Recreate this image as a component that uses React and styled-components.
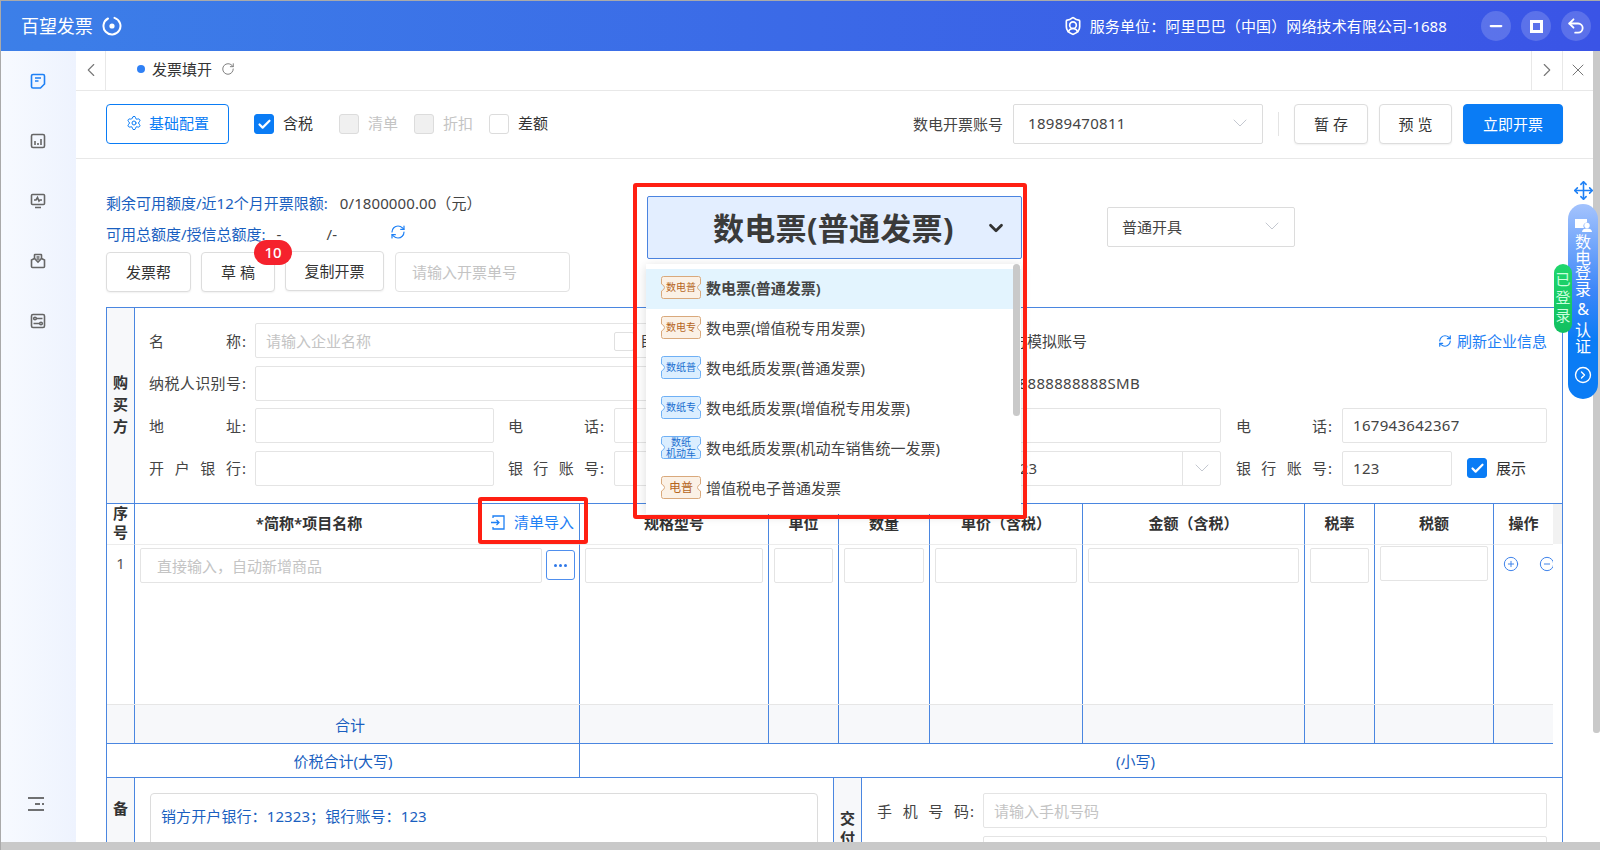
import React from 'react'
import styled, { createGlobalStyle } from 'styled-components'
import {
  Settings, RotateCw, RefreshCw, ChevronDown, ChevronLeft, ChevronRight, X, Minus,
  Undo2, Check, CirclePlus, CircleMinus, Move, CircleChevronRight, ShieldUser,
} from 'lucide-react'

const BLUE = '#0a7cf5'
const LINE = '#4a86e0'
const TEXT_BLUE = '#1a5fc0'
const COLS = '28px 445px 189px 70px 91px 153px 222px 70px 119px 59px'

const Global = createGlobalStyle`
  html, body { margin: 0; padding: 0; overflow: hidden; background: #fff; }
  * { box-sizing: border-box; }
  body {
    font-family: "Noto Sans", "Noto Sans CJK SC", sans-serif;
    font-size: 15px;
    color: #333;
  }
`

const Window = styled.div`
  position: relative;
  width: 1600px;
  height: 850px;
  overflow: hidden;
  display: flex;
  flex-direction: column;
  border-top: 1px solid #aaa;
  border-left: 1px solid #aaa;
`

// Top bar
const Header = styled.header`
  flex: 0 0 50px;
  display: flex;
  align-items: center;
  padding: 0 9px 0 20px;
  color: #fff;
  background: linear-gradient(to right, #3c7fe8, #3a54e6);
`
const Brand = styled.div`
  font-size: 18px;
  line-height: 24px;
  letter-spacing: -0.1px;
  margin-right: 9px;
`
const Service = styled.div`
  margin-left: auto;
  display: flex;
  align-items: center;
  gap: 7px;
  line-height: 24px;
  letter-spacing: 0.12px;
  margin-right: 34px;
`
const WinButton = styled.button`
  width: 30px;
  height: 30px;
  margin-left: 10px;
  padding: 0;
  border: 0;
  border-radius: 50%;
  display: flex;
  align-items: center;
  justify-content: center;
  color: #fff;
  background: rgba(255, 255, 255, 0.17);
  &:first-of-type { margin-left: 0; }
`

const Middle = styled.div`
  flex: 1;
  min-height: 0;
  display: flex;
`
const Sidebar = styled.nav`
  flex: 0 0 75px;
  display: flex;
  flex-direction: column;
  align-items: center;
  padding-right: 2px;
  background: linear-gradient(to right, #f7faff, #eef3fe);
`
const SideItem = styled.div`
  flex: 0 0 60px;
  display: flex;
  align-items: center;
  justify-content: center;
  color: ${p => (p.$active ? '#1e80f5' : '#666')};
`
const SideMenu = styled.div`
  margin-top: auto;
  margin-bottom: 31px;
  margin-right: 3px;
  display: flex;
  color: #444;
`

const Main = styled.main`
  flex: 1;
  min-width: 0;
  overflow: hidden;
  background: #fff;
  border-radius: 20px 0 0 20px;
`
const VScroll = styled.div`
  flex: 0 0 7px;
  background: #fff;
`
const VThumb = styled.div`
  height: 682px;
  background: #c9c9c9;
  border-radius: 0 0 3px 3px;
`
const HScroll = styled.div`
  flex: 0 0 8px;
  background: #c9c9c9;
`

// Tab strip
const TabRow = styled.div`
  height: 40px;
  display: flex;
  align-items: center;
  border-bottom: 1px solid #e8e8e8;
  color: #777;
`
const TabButton = styled.div`
  flex: 0 0 ${p => p.$w}px;
  height: 39px;
  padding-bottom: 2px;
  display: flex;
  align-items: center;
  justify-content: center;
  border-${p => p.$side}: 1px solid #e8e8e8;
`
const Tab = styled.div`
  flex: 1;
  display: flex;
  align-items: center;
  padding: 0 0 3px 31px;
  color: #333;
  line-height: 22px;
`
const TabDot = styled.i`
  width: 8px;
  height: 8px;
  border-radius: 50%;
  background: #2f80f5;
  margin-right: 7px;
`
const TabRefresh = styled(RotateCw)`
  color: #777;
  margin-left: 9px;
`

// Toolbar
const Toolbar = styled.div`
  height: 68px;
  padding: 0 30px 1px;
  display: flex;
  align-items: center;
  border-bottom: 1px solid #e8e8e8;
`
const ConfigButton = styled.button`
  width: 123px;
  height: 40px;
  margin-right: 25px;
  padding: 0 0 3px;
  display: flex;
  align-items: center;
  justify-content: center;
  gap: 7px;
  font: inherit;
  color: ${BLUE};
  background: #fff;
  border: 1px solid ${BLUE};
  border-radius: 4px;
`
const Box = styled.span`
  width: 20px;
  height: 20px;
  display: flex;
  align-items: center;
  justify-content: center;
  border-radius: 3px;
  color: #fff;
  border: 1px solid ${p => (p.$checked ? BLUE : '#dcdcdc')};
  background: ${p => (p.$checked ? BLUE : p.$disabled ? '#f0f0f0' : '#fff')};
`
const CheckItem = styled.label`
  display: flex;
  align-items: center;
  gap: 9px;
  line-height: 20px;
  padding-bottom: 2px;
  margin-right: ${p => p.$mr ?? 16}px;
  color: ${p => (p.$disabled ? '#c4c4c4' : '#333')};
  ${Box} { margin-bottom: -2px; }
`
const ToolRight = styled.div`
  margin-left: auto;
  display: flex;
  align-items: center;
`
const ToolLabel = styled.span`
  color: #444;
  margin-right: 10px;
  line-height: 20px;
`
const Select = styled.div`
  width: ${p => p.$w}px;
  height: 40px;
  flex: none;
  margin-top: ${p => p.$mt ?? 0}px;
  display: flex;
  align-items: center;
  justify-content: space-between;
  padding: 0 10px 2px 14px;
  color: #444;
  background: #fff;
  border: 1px solid #dcdcdc;
  border-radius: 2px;
  svg { color: #c4c8d0; }
`
const Digits = styled.span`
  letter-spacing: 0.3px;
`
const Divider = styled.i`
  width: 1px;
  height: 24px;
  background: #e4e4e4;
  margin: 0 15px;
`
const Button = styled.button`
  width: ${p => p.$w}px;
  height: 40px;
  flex: none;
  padding: 0;
  font: inherit;
  line-height: 22px;
  color: ${p => (p.$primary ? '#fff' : '#333')};
  background: ${p => (p.$primary ? BLUE : '#fff')};
  border: 1px solid ${p => (p.$primary ? BLUE : '#ddd')};
  border-radius: 4px;
  box-shadow: 0 1px 2px rgba(0, 0, 0, 0.06);
  margin-left: ${p => p.$ml ?? 0}px;
  margin-top: ${p => p.$mt ?? 0}px;
  position: relative;
  white-space: pre;
`

// Top area above the form
const Content = styled.div`
  padding: 0 30px;
`
const Top = styled.div`
  height: 148px;
  display: flex;
  align-items: flex-start;
`
const Quota = styled.div`
  flex: 0 0 541px;
  padding-top: 32px;
`
const QuotaLine = styled.div`
  display: flex;
  align-items: center;
  height: 24px;
  line-height: 24px;
  margin-bottom: 7px;
  color: #444;
  white-space: pre;
`
const QuotaKey = styled.span`
  color: ${TEXT_BLUE};
`
const QuotaValue = styled.span`
  margin-left: ${p => p.$ml ?? 0}px;
  letter-spacing: 0.1px;
`
const QuotaRefresh = styled(RefreshCw)`
  color: #1e80f5;
  margin-left: 53px;
  margin-top: -4px;
`
const QuotaActions = styled.div`
  display: flex;
  gap: 10px;
  margin-top: -1px;
`
const Badge = styled.span`
  position: absolute;
  top: -13px;
  left: 52px;
  width: 38px;
  height: 25px;
  border-radius: 13px;
  background: #f5222d;
  color: #fff;
  font-size: 15px;
  font-weight: 500;
  line-height: 25px;
  text-align: center;
  z-index: 2;
`
const DraftInput = styled.div`
  width: 175px;
  height: 40px;
  margin-left: 1px;
  padding: 0 16px;
  line-height: 38px;
  color: #c4c4c4;
  border: 1px solid #e2e2e2;
  border-radius: 4px;
`

// Invoice type picker, with its open menu
const Picker = styled.div`
  position: relative;
  flex: 0 0 375px;
  height: 63px;
  margin-top: 37px;
  margin-right: 85px;
  z-index: 5;
`
const PickerHead = styled.div`
  height: 63px;
  display: flex;
  align-items: center;
  padding: 0 14px 0 65px;
  background: #e3eeff;
  border: 1px solid #4b84e0;
  border-radius: 2px;
  font-size: 31px;
  letter-spacing: 0.3px;
  font-weight: 700;
  color: #3a3a3a;
  line-height: 40px;
  svg { margin-left: auto; color: #333; }
`
const Menu = styled.ul`
  position: absolute;
  left: -1px;
  top: 68px;
  width: 375px;
  height: 250px;
  margin: 0;
  padding: 5px 0 0;
  list-style: none;
  overflow: hidden;
  background: #fff;
  box-shadow: 0 2px 10px rgba(0, 0, 0, 0.14);
`
const MenuThumb = styled.i`
  position: absolute;
  top: 0;
  right: 1px;
  width: 7px;
  height: 152px;
  background: #c9c9c9;
  border-radius: 4px;
`
const MenuItem = styled.li`
  height: 40px;
  display: flex;
  align-items: center;
  padding: 0 0 3px 15px;
  line-height: 22px;
  color: #444;
  background: ${p => (p.$active ? '#e3f4fe' : 'transparent')};
  font-weight: ${p => (p.$active ? 600 : 400)};
`
const Tag = styled.span`
  position: relative;
  flex: 0 0 40px;
  height: 23px;
  margin-right: 5px;
  display: flex;
  align-items: center;
  justify-content: center;
  text-align: center;
  font-weight: 400;
  font-size: ${p => p.$size ?? 10}px;
  line-height: 11px;
  color: ${p => (p.$tone === 'blue' ? '#1a6fd0' : '#b5651d')};
  svg { position: absolute; inset: 0; }
  b { position: relative; font-weight: 400; }
`
const RedFrame = styled.div`
  position: absolute;
  border: 4px solid #ff1f12;
  border-radius: 3px;
  pointer-events: none;
  left: ${p => p.$l}px;
  top: ${p => p.$t}px;
  width: ${p => p.$w}px;
  height: ${p => p.$h}px;
  z-index: 6;
`

// Invoice form
const Form = styled.div`
  width: 1457px;
  border: 1px solid ${LINE};
  border-bottom: 0;
`
const Party = styled.section`
  display: flex;
  height: 196px;
  border-bottom: 1px solid ${LINE};
`
const SideTitle = styled.div`
  flex: 0 0 28px;
  background: #f7f8fa;
  border-right: 1px solid ${LINE};
  display: flex;
  align-items: ${p => (p.$top ? 'flex-start' : 'center')};
  justify-content: center;
  padding-top: ${p => p.$pt ?? 0}px;
  padding-bottom: ${p => (p.$top ? 0 : 3)}px;
  font-weight: 600;
  line-height: ${p => p.$lh ?? 22}px;
  text-align: center;
  color: #333;
`
const PartyBody = styled.div`
  flex: 1;
  padding: 15px 15px 0;
  display: flex;
  flex-direction: column;
  gap: 7.67px;
`
const FieldRow = styled.div`
  display: flex;
  align-items: center;
  height: 35px;
`
const Label = styled.div`
  flex: 0 0 ${p => p.$w ?? 96}px;
  margin-left: ${p => p.$ml ?? 0}px;
  margin-right: ${p => p.$mr ?? 9}px;
  display: flex;
  line-height: 22px;
  color: #444;
  span { flex: 1; margin-left: -1px; text-align: justify; text-align-last: justify; }
  &::after { content: ':'; margin-left: 1px; }
`
const Field = styled.div`
  flex: 0 0 ${p => p.$w}px;
  height: 35px;
  position: relative;
  display: flex;
  align-items: center;
  padding: 0 10px;
  line-height: 33px;
  color: #444;
  background: #fff;
  border: 1px solid #e4e4e4;
  border-radius: 2px;
  ${p => p.$placeholder && 'color: #c4c4c4; padding-top: 1px;'}
`
const AutoBox = styled.i`
  position: absolute;
  left: 358px;
  top: 8px;
  width: 20px;
  height: 19px;
  border: 1px solid #e0e0e0;
  border-radius: 2px;
`
const AutoText = styled.span`
  position: absolute;
  left: 384px;
  top: 0;
  color: #444;
  white-space: nowrap;
`
const Plain = styled.span`
  margin-left: ${p => p.$ml}px;
  color: #444;
  line-height: 22px;
  white-space: nowrap;
`
const RefreshLink = styled.span`
  margin-left: auto;
  display: flex;
  align-items: center;
  gap: 5px;
  color: #1e80f5;
  line-height: 22px;
`
const FieldSuffix = styled.span`
  position: absolute;
  right: 0;
  top: 0;
  bottom: 0;
  width: 38px;
  display: flex;
  align-items: center;
  justify-content: center;
  border-left: 1px solid #e4e4e4;
  color: #c4c8d0;
`
const ShowCheck = styled(CheckItem)`
  margin: 0 0 0 15px;
  padding-bottom: 0;
  ${Box} { margin-bottom: 0; }
`

// Goods table
const Items = styled.div`
  display: flex;
`
const ItemsInner = styled.div`
  flex: 0 0 1446px;
`
const ItemsEdge = styled.div`
  flex: 1;
`
const EdgeHead = styled.div`
  height: 40px;
  background: #f2f2f2;
`
const GridRow = styled.div`
  display: grid;
  grid-template-columns: ${COLS};
  height: ${p => p.$h}px;
  background: ${p => p.$bg ?? '#fff'};
  border-top: ${p => (p.$top ? '1px solid #e6e6e6' : 0)};
  border-bottom: ${p => p.$bottom ?? '0'};
`
const HeadCell = styled.div`
  display: flex;
  align-items: center;
  justify-content: center;
  position: relative;
  padding-bottom: 2px;
  font-weight: 600;
  line-height: ${p => p.$lh ?? 22}px;
  text-align: center;
  color: #333;
  border-right: ${p => (p.$last ? 0 : `1px solid ${LINE}`)};
  border-bottom: 1px solid #ececec;
`
const NameHead = styled.span`
  margin-right: 96px;
`
const ImportLink = styled.span`
  position: absolute;
  left: 355px;
  top: 7px;
  display: flex;
  align-items: center;
  gap: 8px;
  font-weight: 400;
  color: #1e80f5;
  white-space: nowrap;
`
const BodyCell = styled.div`
  display: flex;
  align-items: flex-start;
  gap: ${p => p.$gap ?? 0}px;
  overflow: hidden;
  padding: ${p => p.$pt ?? 4}px ${p => p.$pr ?? 5}px 0 ${p => p.$pl ?? 5}px;
  border-right: ${p => (p.$last ? 0 : `1px solid ${LINE}`)};
`
const RowNo = styled(BodyCell)`
  justify-content: center;
  padding: 8px 0 0;
  line-height: 22px;
  color: #555;
`
const CellInput = styled.div`
  flex: 1;
  min-width: 0;
  height: 35px;
  padding: 1px 15px 0 16px;
  line-height: 33px;
  color: #c4c4c4;
  border: 1px solid #e4e4e4;
  border-radius: 2px;
`
const MoreButton = styled.div`
  flex: 0 0 29px;
  height: 30px;
  margin-top: 2px;
  display: flex;
  align-items: center;
  justify-content: center;
  gap: 2px;
  border: 1px solid #4f8fee;
  border-radius: 3px;
  i { width: 3px; height: 3px; border-radius: 50%; background: #2f78e8; }
`
const OpIcon = styled.span`
  flex: none;
  display: flex;
  margin-top: 8px;
  color: #3f83ea;
`
const SumCell = styled.div`
  display: flex;
  align-items: center;
  justify-content: center;
  padding: 2px ${p => p.$pr ?? 0}px 0 0;
  line-height: 22px;
  color: ${TEXT_BLUE};
  border-right: ${p => (p.$last ? 0 : `1px solid ${LINE}`)};
`
const TotalRow = styled.div`
  display: grid;
  grid-template-columns: 473px 1fr;
  height: 33px;
`
const TotalCell = styled.div`
  display: flex;
  align-items: center;
  justify-content: center;
  padding-left: ${p => p.$pl ?? 0}px;
  line-height: 22px;
  color: ${TEXT_BLUE};
  border-right: ${p => (p.$line ? `1px solid ${LINE}` : 0)};
`

// Remarks and delivery
const Bottom = styled.section`
  display: flex;
  height: 200px;
  border-top: 1px solid ${LINE};
`
const Remarks = styled.div`
  flex: 0 0 699px;
  padding: 15px 15px 0;
  border-right: 1px solid ${LINE};
`
const RemarkBox = styled.div`
  height: 150px;
  padding: 9px 10px;
  letter-spacing: 0.1px;
  line-height: 26px;
  color: ${TEXT_BLUE};
  border: 1px solid #dcdcdc;
  border-radius: 4px;
`
const Delivery = styled.div`
  flex: 1;
  padding: 15px 15px 0 16px;
  display: flex;
  flex-direction: column;
  gap: 8px;
`
const DeliveryGap = styled.div`
  flex: 0 0 105px;
`

// Floating dock at the right edge
const Dock = styled.div`
  position: absolute;
  top: 179px;
  right: 2px;
  width: 30px;
  display: flex;
  flex-direction: column;
  align-items: center;
  z-index: 8;
`
const DockMove = styled(Move)`
  color: #1e80f5;
  margin-bottom: 3px;
`
const DockPill = styled.div`
  width: 30px;
  height: 195px;
  padding-top: 14px;
  border-radius: 15px;
  display: flex;
  flex-direction: column;
  align-items: center;
  color: #fff;
  font-size: 16px;
  line-height: 15.6px;
  text-align: center;
  background: linear-gradient(to bottom, #a4c3fd, #3b86f8 45%, ${BLUE} 70%);
`
const DockText = styled.div`
  margin-top: ${p => p.$mt ?? 0}px;
`
const DockArrow = styled(CircleChevronRight)`
  margin-top: 12px;
`
const LoggedIn = styled.div`
  position: absolute;
  top: 263px;
  right: 28px;
  width: 18px;
  height: 69px;
  padding-top: 6px;
  border-radius: 9px;
  font-size: 15px;
  line-height: 18px;
  text-align: center;
  color: #c8ffdc;
  background: linear-gradient(to bottom, #1fd66c, #12c060);
  z-index: 9;
`

const Logo = () => (
  <svg width="20" height="20" viewBox="0 0 20 20" fill="none" stroke="#fff" strokeWidth="2">
    <path d="M12.5 1.9A8.5 8.5 0 1 1 6 2.5" strokeLinecap="round" />
    <circle cx="10" cy="10" r="2.6" fill="#fff" stroke="none" />
  </svg>
)

const sideIcons = [
  <>
    <path d="M3 1.5h10A1.5 1.5 0 0 1 14.500 3v8L10.500 15H3A1.500 1.500 0 0 1 1.500 13.500V3A1.500 1.500 0 0 1 3 1.500z" />
    <path d="M5 5h6M5 8h3.500" />
  </>,
  <>
    <rect x="1.500" y="1.500" width="13" height="13" rx="1.500" />
    <path d="M5 8v4M8 10v2M11 6v6" />
  </>,
  <>
    <rect x="1.500" y="1.500" width="13" height="10" rx="1" />
    <path d="M4 7h2l1.500-2.500L9 8l1-1h2M5 14.500h6" />
  </>,
  <>
    <path d="M4.500 5.500V2A.500.500 0 0 1 5 1.500h6a.500.500 0 0 1 .500.500v3.500" />
    <path d="M1.500 7l3-1.500L8 9l3.500-3.500 3 1.500v6.500a1 1 0 0 1-1 1h-11a1 1 0 0 1-1-1z" />
    <path d="M6.500 4h3M6.500 6h3" />
  </>,
  <>
    <rect x="1.500" y="1.500" width="13" height="13" rx="1.500" />
    <circle cx="5" cy="5.500" r="1.300" />
    <circle cx="11" cy="10.500" r="1.300" />
    <path d="M6.500 5.500h6M3.500 10.500h6" />
  </>,
]

const SideIcon = ({ children }) => (
  <svg width="16" height="16" viewBox="0 0 16 16" fill="none" stroke="currentColor" strokeWidth="1.6">
    {children}
  </svg>
)

const TicketTag = ({ tone, size, children }) => {
  const fill = tone === 'blue' ? '#dbeeff' : '#fbf1e6'
  const stroke = tone === 'blue' ? '#6fb0f5' : '#d9a97c'
  return (
    <Tag $tone={tone} $size={size}>
      <svg width="40" height="23" viewBox="0 0 40 23" fill={fill} stroke={stroke}>
        <path d="M2.500.5h35a2 2 0 0 1 2 2V8Q36.500 9.500 36.500 11.500T39.500 15v5.500a2 2 0 0 1-2 2h-35a2 2 0 0 1-2-2V15Q3.500 13.500 3.500 11.500T.5 8V2.500a2 2 0 0 1 2-2z" />
      </svg>
      <b>{children}</b>
    </Tag>
  )
}

const menuItems = [
  { tag: '数电普', tone: 'orange', text: '数电票(普通发票)', active: true },
  { tag: '数电专', tone: 'orange', text: '数电票(增值税专用发票)' },
  { tag: '数纸普', tone: 'blue', text: '数电纸质发票(普通发票)' },
  { tag: '数纸专', tone: 'blue', text: '数电纸质发票(增值税专用发票)' },
  { tag: <>数纸<br />机动车</>, tone: 'blue', text: '数电纸质发票(机动车销售统一发票)' },
  { tag: '电普', tone: 'orange', size: 12, text: '增值税电子普通发票' },
]

const columns = ['规格型号', '单位', '数量', '单价（含税）', '金额（含税）', '税率', '税额']

const Chevron = () => <ChevronDown size={24} strokeWidth={1} />

export default function App() {
  return (
    <Window>
      <Global />
      <Header>
        <Brand>百望发票</Brand>
        <Logo />
        <Service>
          <ShieldUser size={20} strokeWidth={2} />
          服务单位：阿里巴巴（中国）网络技术有限公司-1688
        </Service>
        <WinButton><Minus size={18} strokeWidth={3} /></WinButton>
        <WinButton>
          <svg width="13" height="13" viewBox="0 0 13 13" fill="none" stroke="#fff" strokeWidth="3">
            <rect x="1.500" y="1.500" width="10" height="10" />
          </svg>
        </WinButton>
        <WinButton><Undo2 size={20} strokeWidth={2.2} /></WinButton>
      </Header>

      <Middle>
        <Sidebar>
          {sideIcons.map((icon, i) => (
            <SideItem key={i} $active={i === 0}><SideIcon>{icon}</SideIcon></SideItem>
          ))}
          <SideMenu>
            <svg width="17" height="14" viewBox="0 0 17 14" fill="none" stroke="currentColor" strokeWidth="1.300">
              <path d="M0 1h16M7 7h5M14 7h2M0 13h16" />
            </svg>
          </SideMenu>
        </Sidebar>

        <Main>
          <TabRow>
            <TabButton $w={30} $side="right"><ChevronLeft size={22} strokeWidth={1.2} /></TabButton>
            <Tab>
              <TabDot />
              发票填开
              <TabRefresh size={14} strokeWidth={1.6} />
            </Tab>
            <TabButton $w={31} $side="left"><ChevronRight size={22} strokeWidth={1.2} /></TabButton>
            <TabButton $w={31} $side="left"><X size={20} strokeWidth={1.2} /></TabButton>
          </TabRow>

          <Toolbar>
            <ConfigButton><Settings size={16} strokeWidth={1.5} />基础配置</ConfigButton>
            <CheckItem $mr={26}><Box $checked><Check size={15} strokeWidth={3.500} /></Box>含税</CheckItem>
            <CheckItem $disabled><Box $disabled />清单</CheckItem>
            <CheckItem $disabled><Box $disabled />折扣</CheckItem>
            <CheckItem><Box />差额</CheckItem>
            <ToolRight>
              <ToolLabel>数电开票账号</ToolLabel>
              <Select $w={250}><Digits>18989470811</Digits><Chevron /></Select>
              <Divider />
              <Button $w={74}>{'暂 存'}</Button>
              <Button $w={73} $ml={11}>{'预 览'}</Button>
              <Button $w={100} $ml={11} $primary>立即开票</Button>
            </ToolRight>
          </Toolbar>

          <Content>
            <Top>
              <Quota>
                <QuotaLine>
                  <QuotaKey>剩余可用额度/近12个月开票限额:</QuotaKey>
                  <QuotaValue $ml={12}>0/1800000.00（元）</QuotaValue>
                </QuotaLine>
                <QuotaLine>
                  <QuotaKey>可用总额度/授信总额度:</QuotaKey>
                  <QuotaValue $ml={11}>-</QuotaValue>
                  <QuotaValue $ml={45}>/-</QuotaValue>
                  <QuotaRefresh size={16} strokeWidth={1.800} />
                </QuotaLine>
                <QuotaActions>
                  <Button $w={85}>发票帮</Button>
                  <Button $w={74}>{'草 稿'}<Badge>10</Badge></Button>
                  <Button $w={99} $mt={-1}>复制开票</Button>
                  <DraftInput>请输入开票单号</DraftInput>
                </QuotaActions>
              </Quota>

              <Picker>
                <PickerHead>数电票(普通发票)<ChevronDown size={22} strokeWidth={3} /></PickerHead>
                <Menu>
                  {menuItems.map(item => (
                    <MenuItem key={item.text} $active={item.active}>
                      <TicketTag tone={item.tone} size={item.size}>{item.tag}</TicketTag>
                      {item.text}
                    </MenuItem>
                  ))}
                  <MenuThumb />
                </Menu>
                <RedFrame $l={-14} $t={-13} $w={394} $h={336} />
              </Picker>

              <Select $w={188} $mt={48}>普通开具<Chevron /></Select>
            </Top>

            <Form>
              <Party>
                <SideTitle>购<br />买<br />方</SideTitle>
                <PartyBody>
                  <FieldRow>
                    <Label><span>名称</span></Label>
                    <Field $w={598} $placeholder>
                      请输入企业名称
                      <AutoBox />
                      <AutoText>自动</AutoText>
                    </Field>
                    <Plain $ml={144}>销方模拟账号</Plain>
                    <RefreshLink><RefreshCw size={14} strokeWidth={2} />刷新企业信息</RefreshLink>
                  </FieldRow>
                  <FieldRow>
                    <Label><span>纳税人识别号</span></Label>
                    <Field $w={598} />
                    <Plain $ml={139}><Digits>8888888888888SMB</Digits></Plain>
                  </FieldRow>
                  <FieldRow>
                    <Label><span>地址</span></Label>
                    <Field $w={239} />
                    <Label $ml={15} $mr={10} $w={95}><span>电话</span></Label>
                    <Field $w={239} />
                    <Label $ml={15} $mr={10} $w={104}><span>地址</span></Label>
                    <Field $w={239} />
                    <Label $ml={16} $mr={10} $w={95}><span>电话</span></Label>
                    <Field $w={205}><Digits>167943642367</Digits></Field>
                  </FieldRow>
                  <FieldRow>
                    <Label><span>开户银行</span></Label>
                    <Field $w={239} />
                    <Label $ml={15} $mr={10} $w={95}><span>银行账号</span></Label>
                    <Field $w={239} />
                    <Label $ml={15} $mr={10} $w={104}><span>开户银行</span></Label>
                    <Field $w={239}>
                      <Digits>12323</Digits>
                      <FieldSuffix><Chevron /></FieldSuffix>
                    </Field>
                    <Label $ml={16} $mr={10} $w={95}><span>银行账号</span></Label>
                    <Field $w={110}><Digits>123</Digits></Field>
                    <ShowCheck><Box $checked><Check size={15} strokeWidth={3.500} /></Box>展示</ShowCheck>
                  </FieldRow>
                </PartyBody>
              </Party>

              <Items>
                <ItemsInner>
                  <GridRow $h={40}>
                    <HeadCell $lh={19}>序<br />号</HeadCell>
                    <HeadCell>
                      <NameHead>*简称*项目名称</NameHead>
                      <ImportLink>
                        <svg width="16" height="16" viewBox="0 0 16 16" fill="none" stroke="currentColor" strokeWidth="1.300">
                          <path d="M3 4V2h11v13H3v-2M1 8.500h8M6.500 6l2.500 2.500L6.500 11" />
                        </svg>
                        清单导入
                      </ImportLink>
                    </HeadCell>
                    {columns.map(title => <HeadCell key={title}>{title}</HeadCell>)}
                    <HeadCell $last>操作</HeadCell>
                  </GridRow>

                  <GridRow $h={160}>
                    <RowNo>1</RowNo>
                    <BodyCell $gap={4} $pr={4}>
                      <CellInput>直接输入，自动新增商品</CellInput>
                      <MoreButton><i /><i /><i /></MoreButton>
                    </BodyCell>
                    <BodyCell><CellInput /></BodyCell>
                    <BodyCell><CellInput /></BodyCell>
                    <BodyCell><CellInput /></BodyCell>
                    <BodyCell><CellInput /></BodyCell>
                    <BodyCell><CellInput /></BodyCell>
                    <BodyCell><CellInput /></BodyCell>
                    <BodyCell $pt={2}><CellInput /></BodyCell>
                    <BodyCell $last $pl={9} $pr={0} $gap={20}>
                      <OpIcon><CirclePlus size={16} strokeWidth={1.500} /></OpIcon>
                      <OpIcon><CircleMinus size={16} strokeWidth={1.500} /></OpIcon>
                    </BodyCell>
                  </GridRow>

                  <GridRow $h={40} $bg="#f7f8fa" $top $bottom={`1px solid ${LINE}`}>
                    <SumCell />
                    <SumCell $pr={14}>合计</SumCell>
                    <SumCell /><SumCell /><SumCell /><SumCell /><SumCell /><SumCell /><SumCell />
                    <SumCell $last />
                  </GridRow>

                  <TotalRow>
                    <TotalCell $line>价税合计(大写)</TotalCell>
                    <TotalCell $pl={138}>(小写)</TotalCell>
                  </TotalRow>
                </ItemsInner>
                <ItemsEdge><EdgeHead /></ItemsEdge>
              </Items>

              <Bottom>
                <SideTitle $top $lh={60}>备</SideTitle>
                <Remarks>
                  <RemarkBox>销方开户银行：12323；银行账号：123</RemarkBox>
                </Remarks>
                <SideTitle $top $pt={30} $lh={20}>交<br />付</SideTitle>
                <Delivery>
                  <FieldRow>
                    <Label><span>手机号码</span></Label>
                    <Field $w={564} $placeholder>请输入手机号码</Field>
                  </FieldRow>
                  <FieldRow>
                    <DeliveryGap />
                    <Field $w={564} />
                  </FieldRow>
                </Delivery>
              </Bottom>
            </Form>
          </Content>
        </Main>

        <VScroll><VThumb /></VScroll>
      </Middle>
      <HScroll />

      <RedFrame $l={477} $t={496} $w={110} $h={47} />

      <Dock>
        <DockMove size={21} strokeWidth={1.800} />
        <DockPill>
          <svg width="18" height="16" viewBox="0 0 18 16" fill="#fff">
            <path d="M1 1h12v3.500a3.500 3.500 0 0 0-3 5.500H1z" />
            <circle cx="13" cy="7.500" r="2.700" />
            <path d="M8 14c0-2.500 2.200-3.500 5-3.500s5 1 5 3.500z" />
          </svg>
          <DockText $mt={1}>数<br />电<br />登<br />录</DockText>
          <DockText $mt={5}>&amp;</DockText>
          <DockText $mt={5}>认<br />证</DockText>
          <DockArrow size={18} strokeWidth={1.800} />
        </DockPill>
      </Dock>
      <LoggedIn>已<br />登<br />录</LoggedIn>
    </Window>
  )
}
